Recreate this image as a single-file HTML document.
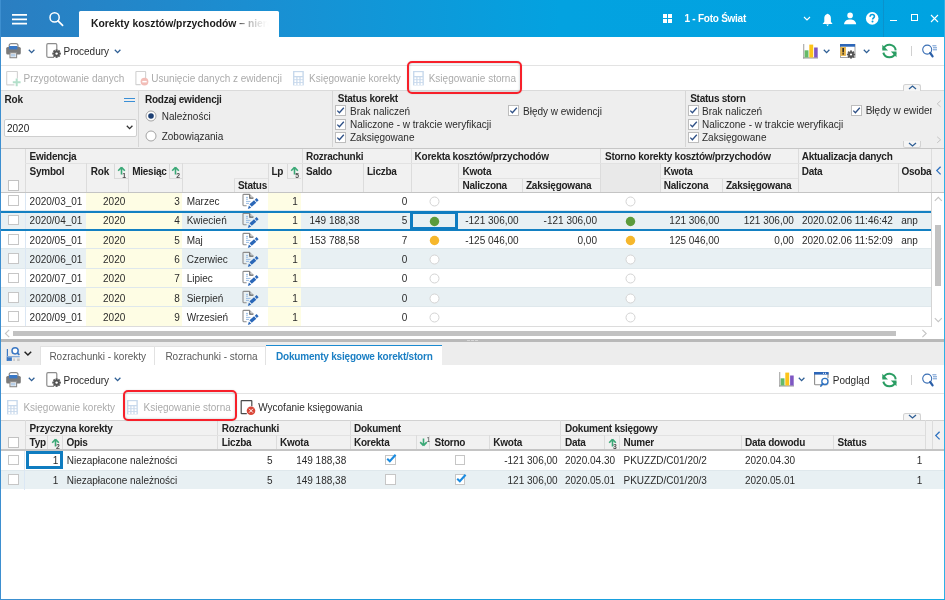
<!DOCTYPE html><html><head><meta charset="utf-8"><style>
*{margin:0;padding:0;box-sizing:border-box}
html,body{width:945px;height:600px;overflow:hidden;background:#fff}
body{position:relative;will-change:transform;font-family:"Liberation Sans",sans-serif;font-size:10px;color:#2b2b2b}
.a{position:absolute}
.t{position:absolute;white-space:nowrap;line-height:12px}
.b{font-weight:bold;font-size:10px;letter-spacing:-0.25px}
.dis{color:#ababab}
.cb{position:absolute;width:11px;height:11px;background:#fff;border:1px solid #c4c4c4}
.hl{position:absolute;background:#dedede}
svg{position:absolute;overflow:visible}
</style></head><body>
<div class="a" style="left:0px;top:0px;width:945px;height:37px;background:linear-gradient(90deg,#2b7ec1 0px,#1a8fd2 260px,#03a2e0 560px,#00a3e1 945px)"></div>
<svg style="left:12px;top:12px" width="16" height="14" viewBox="0 0 16 14"><path d="M0 2.9 H15 M0 7.3 H15 M0 11.6 H15" stroke="#fff" stroke-width="1.7"/></svg>
<svg style="left:48px;top:11px" width="18" height="18" viewBox="0 0 18 18"><circle cx="6.6" cy="6.4" r="4.6" fill="none" stroke="#fff" stroke-width="1.5"/><line x1="10" y1="9.8" x2="14.6" y2="14.4" stroke="#fff" stroke-width="1.7" stroke-linecap="round"/></svg>
<div class="a" style="left:79px;top:11px;width:200px;height:26px;background:#fff;border-radius:1.5px 1.5px 0 0"></div>
<div class="t" style="left:91px;top:18px;font-weight:bold;font-size:10.35px;color:#1a1a1a;width:182px;overflow:hidden;-webkit-mask-image:linear-gradient(90deg,#000 146px,rgba(0,0,0,.55) 152px,rgba(0,0,0,.3) 160px,rgba(0,0,0,.14) 168px,rgba(0,0,0,.04) 174px,transparent 178px)">Korekty kosztów/przychodów – nierozliczone</div>
<div class="a" style="left:662.8px;top:14.2px;width:3.9px;height:3.8px;background:#fff"></div>
<div class="a" style="left:668.3px;top:14.2px;width:3.9px;height:3.8px;background:#fff"></div>
<div class="a" style="left:662.8px;top:18.8px;width:3.9px;height:3.8px;background:#fff"></div>
<div class="a" style="left:668.3px;top:18.8px;width:3.9px;height:3.8px;background:#fff"></div>
<div class="t b" style="left:684.5px;top:12.8px;color:#fff">1 - Foto Świat</div>
<svg style="left:803px;top:16px" width="9" height="6" viewBox="0 0 9 6"><polyline points="1,1 4,4 7,1" fill="none" stroke="#fff" stroke-width="1.1"/></svg>
<svg style="left:822px;top:13px" width="12" height="15" viewBox="0 0 12 15"><path d="M5.5 1.2 C3 1.2 2.3 3.5 2.3 5.5 L2.3 8.8 L0.6 11 L10.6 11 L8.9 8.8 L8.9 5.5 C8.9 3.5 8.2 1.2 5.6 1.2Z" fill="#fff"/><circle cx="5.6" cy="1.6" r="0.9" fill="#fff"/><path d="M4.3 11.6 L6.9 11.6 L5.6 13.2Z" fill="#fff"/></svg>
<svg style="left:843px;top:12px" width="14" height="14" viewBox="0 0 14 14"><circle cx="7.1" cy="3.4" r="2.8" fill="#fff"/><path d="M1 12.2 C1.5 8.6 4 7.4 7.1 7.4 C10.2 7.4 12.7 8.6 13.2 12.2Z" fill="#fff"/></svg>
<svg style="left:865px;top:11px" width="15" height="15" viewBox="0 0 15 15"><circle cx="7.2" cy="7.4" r="6.3" fill="#fff"/><path d="M5.1 5.7 C5.1 4.2 6.1 3.5 7.3 3.5 C8.6 3.5 9.4 4.3 9.4 5.4 C9.4 6.8 7.6 7 7.6 8.6" fill="none" stroke="#06a0de" stroke-width="1.6"/><circle cx="7.5" cy="10.6" r="1" fill="#06a0de"/></svg>
<div class="a" style="left:883px;top:0px;width:1px;height:37px;background:#0a92cc"></div>
<div class="a" style="left:889.7px;top:19.6px;width:7.2px;height:1.2px;background:#fff"></div>
<div class="a" style="left:910.8px;top:13.9px;width:7.2px;height:7.2px;border:1.1px solid #fff"></div>
<svg style="left:930px;top:14px" width="10" height="9" viewBox="0 0 10 9"><path d="M1 1 L8 8 M8 1 L1 8" stroke="#fff" stroke-width="1.1"/></svg>
<svg style="left:5.5px;top:43px" width="16" height="16" viewBox="0 0 16 16"><rect x="3.2" y="0.6" width="8.8" height="5" rx="2" fill="none" stroke="#8a8a8a" stroke-width="1.2"/><rect x="0.2" y="4" width="14.6" height="7.4" rx="1.5" fill="#7a7a7a"/><rect x="3" y="3" width="8.4" height="3.4" fill="#3a78c6"/><rect x="4" y="9.8" width="6.6" height="4.9" fill="#fff" stroke="#8a8a8a" stroke-width="1.1"/><rect x="5" y="11" width="4.6" height="2.6" fill="#b8cfe8"/></svg>
<svg style="left:28px;top:48.5px" width="8" height="5" viewBox="0 0 8 5"><polyline points="0.8,0.8 3.6,3.6 6.4,0.8" fill="none" stroke="#2f5f95" stroke-width="1.3"/></svg>
<svg style="left:45.5px;top:43px" width="16" height="16" viewBox="0 0 16 16"><path d="M8 14.3 L2 14.3 Q0.8 14.3 0.8 13.1 L0.8 1.9 Q0.8 0.7 2 0.7 L9.6 0.7 Q10.8 0.7 10.8 1.9 L10.8 6.8" fill="none" stroke="#8c8c8c" stroke-width="1.2"/><g transform="translate(10.6,10.6)"><circle r="3.1" fill="#555"/><rect x="-1" y="-4.3" width="2" height="2.2" fill="#555" transform="rotate(0)"/><rect x="-1" y="-4.3" width="2" height="2.2" fill="#555" transform="rotate(45)"/><rect x="-1" y="-4.3" width="2" height="2.2" fill="#555" transform="rotate(90)"/><rect x="-1" y="-4.3" width="2" height="2.2" fill="#555" transform="rotate(135)"/><rect x="-1" y="-4.3" width="2" height="2.2" fill="#555" transform="rotate(180)"/><rect x="-1" y="-4.3" width="2" height="2.2" fill="#555" transform="rotate(225)"/><rect x="-1" y="-4.3" width="2" height="2.2" fill="#555" transform="rotate(270)"/><rect x="-1" y="-4.3" width="2" height="2.2" fill="#555" transform="rotate(315)"/><circle r="1.2" fill="#fff"/></g></svg>
<div class="t " style="left:63.5px;top:45.7px;color:#2b2b2b">Procedury</div>
<svg style="left:114px;top:48.5px" width="8" height="5" viewBox="0 0 8 5"><polyline points="0.8,0.8 3.6,3.6 6.4,0.8" fill="none" stroke="#2f5f95" stroke-width="1.3"/></svg>
<svg style="left:803.3px;top:43.5px" width="16" height="16" viewBox="0 0 16 16"><rect x="0" y="0" width="1.3" height="14.5" fill="#b4b4b4"/><rect x="0" y="13.3" width="15" height="1.2" fill="#9a9a9a"/><rect x="1.6" y="6.3" width="3.9" height="7.2" fill="#66b968"/><rect x="6.3" y="0.6" width="3.9" height="12.9" fill="#fcc419"/><rect x="11.1" y="3.5" width="3.6" height="10" fill="#7e57c2"/></svg>
<svg style="left:822.8px;top:48.6px" width="8" height="5" viewBox="0 0 8 5"><polyline points="0.8,0.8 3.6,3.6 6.4,0.8" fill="none" stroke="#2f5f95" stroke-width="1.3"/></svg>
<svg style="left:839.5px;top:43.5px" width="16" height="15" viewBox="0 0 16 15"><rect x="0.5" y="0.5" width="14.5" height="13" fill="#fff" stroke="#9a9a9a" stroke-width="0.9"/><rect x="0" y="0" width="15" height="2.7" fill="#2c66b8"/><rect x="0.3" y="2.9" width="5.6" height="9" fill="#e8b54a"/><rect x="2.4" y="4" width="1.5" height="4.4" fill="#222"/><rect x="2.4" y="9.2" width="1.5" height="1.4" fill="#222"/><g transform="translate(11,10.5)"><circle r="2.9" fill="#555"/><rect x="-0.9" y="-4.1" width="1.8" height="2" fill="#555" transform="rotate(0)"/><rect x="-0.9" y="-4.1" width="1.8" height="2" fill="#555" transform="rotate(45)"/><rect x="-0.9" y="-4.1" width="1.8" height="2" fill="#555" transform="rotate(90)"/><rect x="-0.9" y="-4.1" width="1.8" height="2" fill="#555" transform="rotate(135)"/><rect x="-0.9" y="-4.1" width="1.8" height="2" fill="#555" transform="rotate(180)"/><rect x="-0.9" y="-4.1" width="1.8" height="2" fill="#555" transform="rotate(225)"/><rect x="-0.9" y="-4.1" width="1.8" height="2" fill="#555" transform="rotate(270)"/><rect x="-0.9" y="-4.1" width="1.8" height="2" fill="#555" transform="rotate(315)"/><circle r="1.1" fill="#fff"/></g></svg>
<svg style="left:863px;top:48.6px" width="8" height="5" viewBox="0 0 8 5"><polyline points="0.8,0.8 3.6,3.6 6.4,0.8" fill="none" stroke="#2f5f95" stroke-width="1.3"/></svg>
<svg style="left:880.5px;top:42.5px" width="16" height="16" viewBox="0 0 16 16"><path d="M2.31 6.37 A6.3 6.3 0 0 1 14.68 7.45" fill="none" stroke="#2a9d63" stroke-width="2"/><path d="M2.31 9.63 A6.3 6.3 0 0 0 14.49 9.63" fill="none" stroke="#2a9d63" stroke-width="2"/><path d="M1.3 1.8 L1.3 7.5 L7 7.5Z" fill="#2a9d63"/><path d="M15.5 14.2 L15.5 8.5 L9.8 8.5Z" fill="#2a9d63"/></svg>
<div class="a" style="left:911px;top:45.8px;width:1px;height:10px;background:#d0d0d0"></div>
<svg style="left:922px;top:42.5px" width="16" height="16" viewBox="0 0 16 16"><circle cx="5.2" cy="6.6" r="4.5" fill="none" stroke="#3a6fb5" stroke-width="1.1"/><line x1="8.2" y1="10" x2="10.6" y2="13.4" stroke="#2b5fa8" stroke-width="2.2" stroke-linecap="round"/><path d="M10.4 2.8 H14.4 M11 4.8 H15 M11 6.8 H15" stroke="#5a8acb" stroke-width="0.9"/></svg>
<div class="a" style="left:1px;top:65px;width:943px;height:1px;background:#e3e3e3"></div>
<svg style="left:6px;top:70.6px" width="16" height="16" viewBox="0 0 16 16"><path d="M8.4 13.9 L1.1 13.9 Q0.7 13.9 0.7 13.5 L0.7 0.9 Q0.7 0.5 1.1 0.5 L11 0.5 Q11.4 0.5 11.4 0.9 L11.4 7.6" fill="none" stroke="#d2d2d2" stroke-width="1.1"/><path d="M10.7 7.4 V15.2 M6.8 11.3 H14.6" stroke="#b3dfca" stroke-width="2"/></svg>
<div class="t dis" style="left:23.6px;top:73.2px;">Przygotowanie danych</div>
<svg style="left:134.5px;top:70.8px" width="16" height="16" viewBox="0 0 16 16"><path d="M5.6 13.6 L1.3 13.6 Q0.9 13.6 0.9 13.2 L0.9 0.9 Q0.9 0.5 1.3 0.5 L10.2 0.5 Q10.6 0.5 10.6 0.9 L10.6 7.2" fill="none" stroke="#d2d2d2" stroke-width="1.1"/><circle cx="9.5" cy="10.6" r="3.9" fill="#f2bdb7"/><rect x="7.3" y="9.9" width="4.4" height="1.5" fill="#fff"/></svg>
<div class="t dis" style="left:151.3px;top:73.2px;">Usunięcie danych z ewidencji</div>
<svg style="left:293.4px;top:71px" width="14" height="16" viewBox="0 0 14 16"><rect x="0" y="0" width="10.8" height="14.4" fill="#c8d9ec"/><rect x="1.4" y="1.2" width="8" height="3.8" fill="#fff"/><rect x="1.4" y="6.3" width="1.9" height="2" fill="#fff"/><rect x="1.4" y="9.15" width="1.9" height="2" fill="#fff"/><rect x="1.4" y="12.0" width="1.9" height="2" fill="#fff"/><rect x="4.5" y="6.3" width="1.9" height="2" fill="#fff"/><rect x="4.5" y="9.15" width="1.9" height="2" fill="#fff"/><rect x="4.5" y="12.0" width="1.9" height="2" fill="#fff"/><rect x="7.6" y="6.3" width="1.9" height="2" fill="#fff"/><rect x="7.6" y="9.15" width="1.9" height="2" fill="#fff"/><rect x="7.6" y="12.0" width="1.9" height="2" fill="#fff"/></svg>
<div class="t dis" style="left:309px;top:73.2px;">Księgowanie korekty</div>
<svg style="left:413.1px;top:71px" width="14" height="16" viewBox="0 0 14 16"><rect x="0" y="0" width="10.8" height="14.4" fill="#c8d9ec"/><rect x="1.4" y="1.2" width="8" height="3.8" fill="#fff"/><rect x="1.4" y="6.3" width="1.9" height="2" fill="#fff"/><rect x="1.4" y="9.15" width="1.9" height="2" fill="#fff"/><rect x="1.4" y="12.0" width="1.9" height="2" fill="#fff"/><rect x="4.5" y="6.3" width="1.9" height="2" fill="#fff"/><rect x="4.5" y="9.15" width="1.9" height="2" fill="#fff"/><rect x="4.5" y="12.0" width="1.9" height="2" fill="#fff"/><rect x="7.6" y="6.3" width="1.9" height="2" fill="#fff"/><rect x="7.6" y="9.15" width="1.9" height="2" fill="#fff"/><rect x="7.6" y="12.0" width="1.9" height="2" fill="#fff"/></svg>
<div class="t dis" style="left:428.7px;top:73.2px;">Księgowanie storna</div>
<div class="a" style="left:1px;top:90px;width:943px;height:59.7px;background:#eeeeee;border-top:1px solid #dadada;border-bottom:2px solid #c6c6c6"></div>
<div class="a" style="left:138px;top:91px;width:1px;height:56px;background:#d6d6d6"></div>
<div class="a" style="left:332px;top:91px;width:1px;height:56px;background:#d6d6d6"></div>
<div class="a" style="left:685px;top:91px;width:1px;height:56px;background:#d6d6d6"></div>
<div class="t b" style="left:4.6px;top:94.2px;color:#1e1e1e">Rok</div>
<div class="a" style="left:124px;top:97.5px;width:10.5px;height:1.3px;background:#3a8fd6"></div>
<div class="a" style="left:124px;top:100.6px;width:10.5px;height:1.3px;background:#3a8fd6"></div>
<div class="a" style="left:4px;top:119px;width:132.5px;height:18px;background:#fff;border:1px solid #cfcfcf;border-radius:2px"></div>
<div class="t " style="left:7px;top:123.2px;color:#222">2020</div>
<svg style="left:126px;top:125px" width="8" height="5" viewBox="0 0 8 5"><polyline points="0.8,0.8 3.6,3.6 6.4,0.8" fill="none" stroke="#333" stroke-width="1.3"/></svg>
<div class="t b" style="left:145px;top:94.2px;color:#1e1e1e">Rodzaj ewidencji</div>
<svg style="left:145px;top:110px" width="12" height="12" viewBox="0 0 12 12"><circle cx="6" cy="6" r="5" fill="#fff" stroke="#9a9a9a" stroke-width="0.9"/><circle cx="6" cy="6" r="2.8" fill="#1d3f73"/></svg>
<div class="t " style="left:161.7px;top:111.2px;">Należności</div>
<svg style="left:145px;top:129.7px" width="12" height="12" viewBox="0 0 12 12"><circle cx="6" cy="6" r="5" fill="#fff" stroke="#9a9a9a" stroke-width="0.9"/></svg>
<div class="t " style="left:161.7px;top:130.7px;">Zobowiązania</div>
<div class="t b" style="left:337.8px;top:93.0px;color:#1e1e1e">Status korekt</div>
<div class="a" style="left:335px;top:105.4px;width:11px;height:11px;background:#fff;border:1px solid #bdbdbd"></div>
<svg style="left:335px;top:105.4px" width="11" height="11" viewBox="0 0 11 11"><polyline points="2.3,5.6 4.4,7.7 8.8,2.8" fill="none" stroke="#2d4f86" stroke-width="1.3"/></svg>
<div class="t " style="left:350px;top:105.8px;">Brak naliczeń</div>
<div class="a" style="left:335px;top:118.60000000000001px;width:11px;height:11px;background:#fff;border:1px solid #bdbdbd"></div>
<svg style="left:335px;top:118.60000000000001px" width="11" height="11" viewBox="0 0 11 11"><polyline points="2.3,5.6 4.4,7.7 8.8,2.8" fill="none" stroke="#2d4f86" stroke-width="1.3"/></svg>
<div class="t " style="left:350px;top:119.0px;">Naliczone - w trakcie weryfikacji</div>
<div class="a" style="left:335px;top:131.8px;width:11px;height:11px;background:#fff;border:1px solid #bdbdbd"></div>
<svg style="left:335px;top:131.8px" width="11" height="11" viewBox="0 0 11 11"><polyline points="2.3,5.6 4.4,7.7 8.8,2.8" fill="none" stroke="#2d4f86" stroke-width="1.3"/></svg>
<div class="t " style="left:350px;top:132.2px;">Zaksięgowane</div>
<div class="a" style="left:508px;top:105.4px;width:11px;height:11px;background:#fff;border:1px solid #bdbdbd"></div>
<svg style="left:508px;top:105.4px" width="11" height="11" viewBox="0 0 11 11"><polyline points="2.3,5.6 4.4,7.7 8.8,2.8" fill="none" stroke="#2d4f86" stroke-width="1.3"/></svg>
<div class="t " style="left:523px;top:105.8px;">Błędy w ewidencji</div>
<div class="t b" style="left:690.2px;top:93.0px;color:#1e1e1e">Status storn</div>
<div class="a" style="left:688.2px;top:105.4px;width:11px;height:11px;background:#fff;border:1px solid #bdbdbd"></div>
<svg style="left:688.2px;top:105.4px" width="11" height="11" viewBox="0 0 11 11"><polyline points="2.3,5.6 4.4,7.7 8.8,2.8" fill="none" stroke="#2d4f86" stroke-width="1.3"/></svg>
<div class="t " style="left:702px;top:105.8px;">Brak naliczeń</div>
<div class="a" style="left:688.2px;top:118.60000000000001px;width:11px;height:11px;background:#fff;border:1px solid #bdbdbd"></div>
<svg style="left:688.2px;top:118.60000000000001px" width="11" height="11" viewBox="0 0 11 11"><polyline points="2.3,5.6 4.4,7.7 8.8,2.8" fill="none" stroke="#2d4f86" stroke-width="1.3"/></svg>
<div class="t " style="left:702px;top:119.0px;">Naliczone - w trakcie weryfikacji</div>
<div class="a" style="left:688.2px;top:131.8px;width:11px;height:11px;background:#fff;border:1px solid #bdbdbd"></div>
<svg style="left:688.2px;top:131.8px" width="11" height="11" viewBox="0 0 11 11"><polyline points="2.3,5.6 4.4,7.7 8.8,2.8" fill="none" stroke="#2d4f86" stroke-width="1.3"/></svg>
<div class="t " style="left:702px;top:132.2px;">Zaksięgowane</div>
<div class="a" style="left:851px;top:105.4px;width:11px;height:11px;background:#fff;border:1px solid #bdbdbd"></div>
<svg style="left:851px;top:105.4px" width="11" height="11" viewBox="0 0 11 11"><polyline points="2.3,5.6 4.4,7.7 8.8,2.8" fill="none" stroke="#2d4f86" stroke-width="1.3"/></svg>
<div class="t" style="left:865.7px;top:104.6px;width:66px;overflow:hidden">Błędy w ewidencji</div>
<svg style="left:935.5px;top:99.5px" width="6" height="8" viewBox="0 0 6 8"><polyline points="4.6,0.8 1.2,3.8 4.6,6.8" fill="none" stroke="#c4c4c4" stroke-width="1"/></svg>
<svg style="left:935.5px;top:136.2px" width="6" height="8" viewBox="0 0 6 8"><polyline points="1.2,0.8 4.6,3.8 1.2,6.8" fill="none" stroke="#c4c4c4" stroke-width="1"/></svg>
<div class="a" style="left:903.3px;top:83.9px;width:18.1px;height:7.2px;background:#f5f5f5;border:1px solid #d2d2d2;border-bottom:none;border-radius:2.5px 2.5px 0 0"></div>
<svg style="left:907.5999999999999px;top:84.9px" width="9" height="5" viewBox="0 0 9 5"><polyline points="1,4 4.5,1 8,4" fill="none" stroke="#2f5f95" stroke-width="1.3"/></svg>
<div class="a" style="left:903.3px;top:140.6px;width:18.1px;height:7.2px;background:#f5f5f5;border:1px solid #d2d2d2;border-top:none;border-radius:0 0 2.5px 2.5px"></div>
<svg style="left:907.5999999999999px;top:141.6px" width="9" height="5" viewBox="0 0 9 5"><polyline points="1,1 4.5,4 8,1" fill="none" stroke="#2f5f95" stroke-width="1.3"/></svg>
<div class="a" style="left:1.00px;top:149.00px;width:930.40px;height:43.00px;background:#f1f1f1"></div>
<div class="a" style="left:931.40px;top:149.00px;width:12.60px;height:43.00px;background:#f1f1f1;border-left:1px solid #dcdcdc"></div>
<svg style="left:934.50px;top:166.00px" width="8" height="10" viewBox="0 0 8 10"><polyline points="5.6,0.8 1.8,4.6 5.6,8.4" fill="none" stroke="#2f72c0" stroke-width="1.3"/></svg>
<div class="a" style="left:25.40px;top:149.30px;width:1.00px;height:42.40px;background:#dcdcdc"></div>
<div class="a" style="left:301.50px;top:149.30px;width:1.00px;height:42.40px;background:#dcdcdc"></div>
<div class="a" style="left:410.60px;top:149.30px;width:1.00px;height:42.40px;background:#dcdcdc"></div>
<div class="a" style="left:600.40px;top:149.30px;width:1.00px;height:42.40px;background:#dcdcdc"></div>
<div class="a" style="left:797.60px;top:149.30px;width:1.00px;height:42.40px;background:#dcdcdc"></div>
<div class="a" style="left:931.40px;top:149.30px;width:1.00px;height:42.40px;background:#dcdcdc"></div>
<div class="a" style="left:25.40px;top:163.40px;width:906.00px;height:1.00px;background:#e2e2e2"></div>
<div class="a" style="left:86.40px;top:163.40px;width:1.00px;height:28.30px;background:#dcdcdc"></div>
<div class="a" style="left:128.30px;top:163.40px;width:1.00px;height:28.30px;background:#dcdcdc"></div>
<div class="a" style="left:182.40px;top:163.40px;width:1.00px;height:28.30px;background:#dcdcdc"></div>
<div class="a" style="left:267.70px;top:163.40px;width:1.00px;height:28.30px;background:#dcdcdc"></div>
<div class="a" style="left:363.40px;top:163.40px;width:1.00px;height:28.30px;background:#dcdcdc"></div>
<div class="a" style="left:458.40px;top:163.40px;width:1.00px;height:28.30px;background:#dcdcdc"></div>
<div class="a" style="left:659.80px;top:163.40px;width:1.00px;height:28.30px;background:#dcdcdc"></div>
<div class="a" style="left:897.60px;top:163.40px;width:1.00px;height:28.30px;background:#dcdcdc"></div>
<div class="a" style="left:234.30px;top:178.40px;width:1.00px;height:13.30px;background:#dcdcdc"></div>
<div class="a" style="left:522.40px;top:178.40px;width:1.00px;height:13.30px;background:#dcdcdc"></div>
<div class="a" style="left:722.30px;top:178.40px;width:1.00px;height:13.30px;background:#dcdcdc"></div>
<div class="a" style="left:234.30px;top:178.40px;width:33.40px;height:1.00px;background:#e2e2e2"></div>
<div class="a" style="left:458.40px;top:178.40px;width:142.00px;height:1.00px;background:#e2e2e2"></div>
<div class="a" style="left:659.80px;top:178.40px;width:137.80px;height:1.00px;background:#e2e2e2"></div>
<div class="a" style="left:601.40px;top:164.40px;width:58.40px;height:27.30px;background:#e9e9e9"></div>
<div class="a" style="left:113.80px;top:163.90px;width:14.50px;height:15.00px;border-left:1px solid #dadada;border-bottom:1px solid #dadada"></div>
<svg style="left:117.95px;top:167.20px" width="12" height="12" viewBox="0 0 12 12"><path d="M3.5 0.3 L0.2 3.8 M3.5 0.3 L6.8 3.8 M3.5 0.5 V7.4" fill="none" stroke="#3aa876" stroke-width="1.6"/></svg>
<div class="t" style="right:819.10px;top:171.50px;font-size:6.8px;font-weight:bold;line-height:7px;color:#4a4a4a">1</div>
<div class="a" style="left:168.70px;top:163.90px;width:13.70px;height:15.00px;border-left:1px solid #dadada;border-bottom:1px solid #dadada"></div>
<svg style="left:172.45px;top:167.20px" width="12" height="12" viewBox="0 0 12 12"><path d="M3.5 0.3 L0.2 3.8 M3.5 0.3 L6.8 3.8 M3.5 0.5 V7.4" fill="none" stroke="#3aa876" stroke-width="1.6"/></svg>
<div class="t" style="right:765.00px;top:171.50px;font-size:6.8px;font-weight:bold;line-height:7px;color:#4a4a4a">2</div>
<div class="a" style="left:287.20px;top:163.90px;width:14.30px;height:15.00px;border-left:1px solid #dadada;border-bottom:1px solid #dadada"></div>
<svg style="left:291.25px;top:167.20px" width="12" height="12" viewBox="0 0 12 12"><path d="M3.5 0.3 L0.2 3.8 M3.5 0.3 L6.8 3.8 M3.5 0.5 V7.4" fill="none" stroke="#3aa876" stroke-width="1.6"/></svg>
<div class="t" style="right:645.90px;top:171.50px;font-size:6.8px;font-weight:bold;line-height:7px;color:#4a4a4a">5</div>
<div class="a" style="left:1.00px;top:191.70px;width:930.40px;height:1.40px;background:#c4c4c4"></div>
<div class="a" style="left:931.40px;top:191.70px;width:12.60px;height:1.40px;background:#c4c4c4"></div>
<div class="t b" style="left:29.60px;top:150.90px;color:#222">Ewidencja</div>
<div class="t b" style="left:306.00px;top:150.90px;color:#222">Rozrachunki</div>
<div class="t b" style="left:414.60px;top:150.90px;color:#222">Korekta kosztów/przychodów</div>
<div class="t b" style="left:605.00px;top:150.90px;color:#222">Storno korekty kosztów/przychodów</div>
<div class="t b" style="left:801.70px;top:150.90px;color:#222">Aktualizacja danych</div>
<div class="t b" style="left:29.60px;top:166.40px;color:#222">Symbol</div>
<div class="t b" style="left:90.80px;top:166.40px;color:#222">Rok</div>
<div class="t b" style="left:132.20px;top:166.40px;color:#222">Miesiąc</div>
<div class="t b" style="left:271.50px;top:166.40px;color:#222">Lp</div>
<div class="t b" style="left:306.00px;top:166.40px;color:#222">Saldo</div>
<div class="t b" style="left:367.00px;top:166.40px;color:#222">Liczba</div>
<div class="t b" style="left:462.50px;top:166.40px;color:#222">Kwota</div>
<div class="t b" style="left:663.80px;top:166.40px;color:#222">Kwota</div>
<div class="t b" style="left:801.70px;top:166.40px;color:#222">Data</div>
<div class="t b" style="left:901.50px;top:166.40px;color:#222">Osoba</div>
<div class="t b" style="left:237.90px;top:180.40px;color:#222">Status</div>
<div class="t b" style="left:462.50px;top:180.40px;color:#222">Naliczona</div>
<div class="t b" style="left:526.00px;top:180.40px;color:#222">Zaksięgowana</div>
<div class="t b" style="left:663.80px;top:180.40px;color:#222">Naliczona</div>
<div class="t b" style="left:726.00px;top:180.40px;color:#222">Zaksięgowana</div>
<div class="a" style="left:7.60px;top:180.00px;width:11.00px;height:10.80px;background:#fff;border:1px solid #c2c2c2"></div>
<div class="a" style="left:1px;top:193.1px;width:930.4px;height:133px;overflow:hidden;background:#fff">
<div class="a" style="left:0;top:-2.06px;width:930.4px;height:19.32px;background:#fff"></div>
<div class="a" style="left:85.40px;top:-2.06px;width:96.00px;height:19.32px;background:#fefde4"></div>
<div class="a" style="left:266.70px;top:-2.06px;width:33.80px;height:19.32px;background:#fefde4"></div>
<div class="a" style="left:0;top:17.26px;width:930.4px;height:19.32px;background:#e8f0f3"></div>
<div class="a" style="left:85.40px;top:17.26px;width:96.00px;height:19.32px;background:#fefde4"></div>
<div class="a" style="left:266.70px;top:17.26px;width:33.80px;height:19.32px;background:#fefde4"></div>
<div class="a" style="left:0;top:36.58px;width:930.4px;height:19.32px;background:#fff"></div>
<div class="a" style="left:85.40px;top:36.58px;width:96.00px;height:19.32px;background:#fefde4"></div>
<div class="a" style="left:266.70px;top:36.58px;width:33.80px;height:19.32px;background:#fefde4"></div>
<div class="a" style="left:0;top:55.90px;width:930.4px;height:19.32px;background:#e8f0f3"></div>
<div class="a" style="left:85.40px;top:55.90px;width:96.00px;height:19.32px;background:#fefde4"></div>
<div class="a" style="left:266.70px;top:55.90px;width:33.80px;height:19.32px;background:#fefde4"></div>
<div class="a" style="left:0;top:75.22px;width:930.4px;height:19.32px;background:#fff"></div>
<div class="a" style="left:85.40px;top:75.22px;width:96.00px;height:19.32px;background:#fefde4"></div>
<div class="a" style="left:266.70px;top:75.22px;width:33.80px;height:19.32px;background:#fefde4"></div>
<div class="a" style="left:0;top:94.54px;width:930.4px;height:19.32px;background:#e8f0f3"></div>
<div class="a" style="left:85.40px;top:94.54px;width:96.00px;height:19.32px;background:#fefde4"></div>
<div class="a" style="left:266.70px;top:94.54px;width:33.80px;height:19.32px;background:#fefde4"></div>
<div class="a" style="left:0;top:113.86px;width:930.4px;height:19.32px;background:#fff"></div>
<div class="a" style="left:85.40px;top:113.86px;width:96.00px;height:19.32px;background:#fefde4"></div>
<div class="a" style="left:266.70px;top:113.86px;width:33.80px;height:19.32px;background:#fefde4"></div>
<div class="a" style="left:0;top:16.76px;width:930.4px;height:1px;background:#dfe8ec"></div>
<div class="a" style="left:0;top:36.08px;width:930.4px;height:1px;background:#dfe8ec"></div>
<div class="a" style="left:0;top:55.40px;width:930.4px;height:1px;background:#dfe8ec"></div>
<div class="a" style="left:0;top:74.72px;width:930.4px;height:1px;background:#dfe8ec"></div>
<div class="a" style="left:0;top:94.04px;width:930.4px;height:1px;background:#dfe8ec"></div>
<div class="a" style="left:0;top:113.36px;width:930.4px;height:1px;background:#dfe8ec"></div>
<div class="a" style="left:24.4px;top:0;width:1px;height:133px;background:#dbe7f4"></div>
</div>
<div class="a" style="left:8.00px;top:195.40px;width:10.60px;height:10.60px;background:#fff;border:1px solid #c6c6c6"></div>
<div class="t " style="left:29.60px;top:195.90px;">2020/03_01</div>
<div class="t " style="right:819.70px;top:195.90px;">2020</div>
<div class="t " style="right:765.30px;top:195.90px;">3</div>
<div class="t " style="left:186.70px;top:195.90px;">Marzec</div>
<svg style="left:240.00px;top:193.00px" width="20" height="18" viewBox="0 0 20 18"><path d="M6.6 12.7 H3.6 Q3 12.7 3 12.1 V2 Q3 1.4 3.6 1.4 H9.8" fill="none" stroke="#8c8c8c" stroke-width="1.1"/><path d="M9.8 1.6 V5.2 H13.4" fill="none" stroke="#5a5a5a" stroke-width="1.2"/><path d="M10.2 1.8 L13.2 4.8" stroke="#9a9a9a" stroke-width="0.8"/><path d="M6 4.4 H8 M6 6.2 H8 M6 8.4 H10.4 M6 10.4 H9" stroke="#8db4e0" stroke-width="0.9"/><line x1="10.6" y1="12.6" x2="15.2" y2="8.4" stroke="#2a67b8" stroke-width="3.4"/><line x1="15.8" y1="7.8" x2="17.6" y2="6.2" stroke="#2a67b8" stroke-width="3"/><path d="M7.9 15.9 L8.9 12.6 L11.2 14.8Z" fill="#2a67b8"/></svg>
<div class="t " style="right:647.20px;top:195.90px;">1</div>
<div class="t " style="right:537.80px;top:195.90px;">0</div>
<svg style="left:428.90px;top:196.20px" width="11" height="11" viewBox="0 0 11 11"><circle cx="5.5" cy="5.5" r="4.5" fill="#fff" stroke="#d4d4d4" stroke-width="1"/></svg>
<svg style="left:624.70px;top:196.20px" width="11" height="11" viewBox="0 0 11 11"><circle cx="5.5" cy="5.5" r="4.5" fill="#fff" stroke="#d4d4d4" stroke-width="1"/></svg>
<div class="a" style="left:8.00px;top:214.72px;width:10.60px;height:10.60px;background:#fff;border:1px solid #c6c6c6"></div>
<div class="t " style="left:29.60px;top:215.22px;">2020/04_01</div>
<div class="t " style="right:819.70px;top:215.22px;">2020</div>
<div class="t " style="right:765.30px;top:215.22px;">4</div>
<div class="t " style="left:186.70px;top:215.22px;">Kwiecień</div>
<svg style="left:240.00px;top:212.32px" width="20" height="18" viewBox="0 0 20 18"><path d="M6.6 12.7 H3.6 Q3 12.7 3 12.1 V2 Q3 1.4 3.6 1.4 H9.8" fill="none" stroke="#8c8c8c" stroke-width="1.1"/><path d="M9.8 1.6 V5.2 H13.4" fill="none" stroke="#5a5a5a" stroke-width="1.2"/><path d="M10.2 1.8 L13.2 4.8" stroke="#9a9a9a" stroke-width="0.8"/><path d="M6 4.4 H8 M6 6.2 H8 M6 8.4 H10.4 M6 10.4 H9" stroke="#8db4e0" stroke-width="0.9"/><line x1="10.6" y1="12.6" x2="15.2" y2="8.4" stroke="#2a67b8" stroke-width="3.4"/><line x1="15.8" y1="7.8" x2="17.6" y2="6.2" stroke="#2a67b8" stroke-width="3"/><path d="M7.9 15.9 L8.9 12.6 L11.2 14.8Z" fill="#2a67b8"/></svg>
<div class="t " style="right:647.20px;top:215.22px;">1</div>
<div class="t " style="right:585.50px;top:215.22px;">149 188,38</div>
<div class="t " style="right:537.80px;top:215.22px;">5</div>
<svg style="left:428.90px;top:215.52px" width="11" height="11" viewBox="0 0 11 11"><circle cx="5.5" cy="5.5" r="4.7" fill="#5b9b3c"/></svg>
<svg style="left:624.70px;top:215.52px" width="11" height="11" viewBox="0 0 11 11"><circle cx="5.5" cy="5.5" r="4.7" fill="#5b9b3c"/></svg>
<div class="t " style="right:426.40px;top:215.22px;">-121 306,00</div>
<div class="t " style="right:348.00px;top:215.22px;">-121 306,00</div>
<div class="t " style="right:225.60px;top:215.22px;">121 306,00</div>
<div class="t " style="right:151.20px;top:215.22px;">121 306,00</div>
<div class="t " style="left:801.90px;top:215.22px;">2020.02.06 11:46:42</div>
<div class="t " style="left:901.20px;top:215.22px;">anp</div>
<div class="a" style="left:8.00px;top:234.04px;width:10.60px;height:10.60px;background:#fff;border:1px solid #c6c6c6"></div>
<div class="t " style="left:29.60px;top:234.54px;">2020/05_01</div>
<div class="t " style="right:819.70px;top:234.54px;">2020</div>
<div class="t " style="right:765.30px;top:234.54px;">5</div>
<div class="t " style="left:186.70px;top:234.54px;">Maj</div>
<svg style="left:240.00px;top:231.64px" width="20" height="18" viewBox="0 0 20 18"><path d="M6.6 12.7 H3.6 Q3 12.7 3 12.1 V2 Q3 1.4 3.6 1.4 H9.8" fill="none" stroke="#8c8c8c" stroke-width="1.1"/><path d="M9.8 1.6 V5.2 H13.4" fill="none" stroke="#5a5a5a" stroke-width="1.2"/><path d="M10.2 1.8 L13.2 4.8" stroke="#9a9a9a" stroke-width="0.8"/><path d="M6 4.4 H8 M6 6.2 H8 M6 8.4 H10.4 M6 10.4 H9" stroke="#8db4e0" stroke-width="0.9"/><line x1="10.6" y1="12.6" x2="15.2" y2="8.4" stroke="#2a67b8" stroke-width="3.4"/><line x1="15.8" y1="7.8" x2="17.6" y2="6.2" stroke="#2a67b8" stroke-width="3"/><path d="M7.9 15.9 L8.9 12.6 L11.2 14.8Z" fill="#2a67b8"/></svg>
<div class="t " style="right:647.20px;top:234.54px;">1</div>
<div class="t " style="right:585.50px;top:234.54px;">153 788,58</div>
<div class="t " style="right:537.80px;top:234.54px;">7</div>
<svg style="left:428.90px;top:234.84px" width="11" height="11" viewBox="0 0 11 11"><circle cx="5.5" cy="5.5" r="4.7" fill="#f6b72c"/></svg>
<svg style="left:624.70px;top:234.84px" width="11" height="11" viewBox="0 0 11 11"><circle cx="5.5" cy="5.5" r="4.7" fill="#f6b72c"/></svg>
<div class="t " style="right:426.40px;top:234.54px;">-125 046,00</div>
<div class="t " style="right:348.00px;top:234.54px;">0,00</div>
<div class="t " style="right:225.60px;top:234.54px;">125 046,00</div>
<div class="t " style="right:151.20px;top:234.54px;">0,00</div>
<div class="t " style="left:801.90px;top:234.54px;">2020.02.06 11:52:09</div>
<div class="t " style="left:901.20px;top:234.54px;">anp</div>
<div class="a" style="left:8.00px;top:253.36px;width:10.60px;height:10.60px;background:#fff;border:1px solid #c6c6c6"></div>
<div class="t " style="left:29.60px;top:253.86px;">2020/06_01</div>
<div class="t " style="right:819.70px;top:253.86px;">2020</div>
<div class="t " style="right:765.30px;top:253.86px;">6</div>
<div class="t " style="left:186.70px;top:253.86px;">Czerwiec</div>
<svg style="left:240.00px;top:250.96px" width="20" height="18" viewBox="0 0 20 18"><path d="M6.6 12.7 H3.6 Q3 12.7 3 12.1 V2 Q3 1.4 3.6 1.4 H9.8" fill="none" stroke="#8c8c8c" stroke-width="1.1"/><path d="M9.8 1.6 V5.2 H13.4" fill="none" stroke="#5a5a5a" stroke-width="1.2"/><path d="M10.2 1.8 L13.2 4.8" stroke="#9a9a9a" stroke-width="0.8"/><path d="M6 4.4 H8 M6 6.2 H8 M6 8.4 H10.4 M6 10.4 H9" stroke="#8db4e0" stroke-width="0.9"/><line x1="10.6" y1="12.6" x2="15.2" y2="8.4" stroke="#2a67b8" stroke-width="3.4"/><line x1="15.8" y1="7.8" x2="17.6" y2="6.2" stroke="#2a67b8" stroke-width="3"/><path d="M7.9 15.9 L8.9 12.6 L11.2 14.8Z" fill="#2a67b8"/></svg>
<div class="t " style="right:647.20px;top:253.86px;">1</div>
<div class="t " style="right:537.80px;top:253.86px;">0</div>
<svg style="left:428.90px;top:254.16px" width="11" height="11" viewBox="0 0 11 11"><circle cx="5.5" cy="5.5" r="4.5" fill="#fff" stroke="#d4d4d4" stroke-width="1"/></svg>
<svg style="left:624.70px;top:254.16px" width="11" height="11" viewBox="0 0 11 11"><circle cx="5.5" cy="5.5" r="4.5" fill="#fff" stroke="#d4d4d4" stroke-width="1"/></svg>
<div class="a" style="left:8.00px;top:272.68px;width:10.60px;height:10.60px;background:#fff;border:1px solid #c6c6c6"></div>
<div class="t " style="left:29.60px;top:273.18px;">2020/07_01</div>
<div class="t " style="right:819.70px;top:273.18px;">2020</div>
<div class="t " style="right:765.30px;top:273.18px;">7</div>
<div class="t " style="left:186.70px;top:273.18px;">Lipiec</div>
<svg style="left:240.00px;top:270.28px" width="20" height="18" viewBox="0 0 20 18"><path d="M6.6 12.7 H3.6 Q3 12.7 3 12.1 V2 Q3 1.4 3.6 1.4 H9.8" fill="none" stroke="#8c8c8c" stroke-width="1.1"/><path d="M9.8 1.6 V5.2 H13.4" fill="none" stroke="#5a5a5a" stroke-width="1.2"/><path d="M10.2 1.8 L13.2 4.8" stroke="#9a9a9a" stroke-width="0.8"/><path d="M6 4.4 H8 M6 6.2 H8 M6 8.4 H10.4 M6 10.4 H9" stroke="#8db4e0" stroke-width="0.9"/><line x1="10.6" y1="12.6" x2="15.2" y2="8.4" stroke="#2a67b8" stroke-width="3.4"/><line x1="15.8" y1="7.8" x2="17.6" y2="6.2" stroke="#2a67b8" stroke-width="3"/><path d="M7.9 15.9 L8.9 12.6 L11.2 14.8Z" fill="#2a67b8"/></svg>
<div class="t " style="right:647.20px;top:273.18px;">1</div>
<div class="t " style="right:537.80px;top:273.18px;">0</div>
<svg style="left:428.90px;top:273.48px" width="11" height="11" viewBox="0 0 11 11"><circle cx="5.5" cy="5.5" r="4.5" fill="#fff" stroke="#d4d4d4" stroke-width="1"/></svg>
<svg style="left:624.70px;top:273.48px" width="11" height="11" viewBox="0 0 11 11"><circle cx="5.5" cy="5.5" r="4.5" fill="#fff" stroke="#d4d4d4" stroke-width="1"/></svg>
<div class="a" style="left:8.00px;top:292.00px;width:10.60px;height:10.60px;background:#fff;border:1px solid #c6c6c6"></div>
<div class="t " style="left:29.60px;top:292.50px;">2020/08_01</div>
<div class="t " style="right:819.70px;top:292.50px;">2020</div>
<div class="t " style="right:765.30px;top:292.50px;">8</div>
<div class="t " style="left:186.70px;top:292.50px;">Sierpień</div>
<svg style="left:240.00px;top:289.60px" width="20" height="18" viewBox="0 0 20 18"><path d="M6.6 12.7 H3.6 Q3 12.7 3 12.1 V2 Q3 1.4 3.6 1.4 H9.8" fill="none" stroke="#8c8c8c" stroke-width="1.1"/><path d="M9.8 1.6 V5.2 H13.4" fill="none" stroke="#5a5a5a" stroke-width="1.2"/><path d="M10.2 1.8 L13.2 4.8" stroke="#9a9a9a" stroke-width="0.8"/><path d="M6 4.4 H8 M6 6.2 H8 M6 8.4 H10.4 M6 10.4 H9" stroke="#8db4e0" stroke-width="0.9"/><line x1="10.6" y1="12.6" x2="15.2" y2="8.4" stroke="#2a67b8" stroke-width="3.4"/><line x1="15.8" y1="7.8" x2="17.6" y2="6.2" stroke="#2a67b8" stroke-width="3"/><path d="M7.9 15.9 L8.9 12.6 L11.2 14.8Z" fill="#2a67b8"/></svg>
<div class="t " style="right:647.20px;top:292.50px;">1</div>
<div class="t " style="right:537.80px;top:292.50px;">0</div>
<svg style="left:428.90px;top:292.80px" width="11" height="11" viewBox="0 0 11 11"><circle cx="5.5" cy="5.5" r="4.5" fill="#fff" stroke="#d4d4d4" stroke-width="1"/></svg>
<svg style="left:624.70px;top:292.80px" width="11" height="11" viewBox="0 0 11 11"><circle cx="5.5" cy="5.5" r="4.5" fill="#fff" stroke="#d4d4d4" stroke-width="1"/></svg>
<div class="a" style="left:8.00px;top:311.32px;width:10.60px;height:10.60px;background:#fff;border:1px solid #c6c6c6"></div>
<div class="t " style="left:29.60px;top:311.82px;">2020/09_01</div>
<div class="t " style="right:819.70px;top:311.82px;">2020</div>
<div class="t " style="right:765.30px;top:311.82px;">9</div>
<div class="t " style="left:186.70px;top:311.82px;">Wrzesień</div>
<svg style="left:240.00px;top:308.92px" width="20" height="18" viewBox="0 0 20 18"><path d="M6.6 12.7 H3.6 Q3 12.7 3 12.1 V2 Q3 1.4 3.6 1.4 H9.8" fill="none" stroke="#8c8c8c" stroke-width="1.1"/><path d="M9.8 1.6 V5.2 H13.4" fill="none" stroke="#5a5a5a" stroke-width="1.2"/><path d="M10.2 1.8 L13.2 4.8" stroke="#9a9a9a" stroke-width="0.8"/><path d="M6 4.4 H8 M6 6.2 H8 M6 8.4 H10.4 M6 10.4 H9" stroke="#8db4e0" stroke-width="0.9"/><line x1="10.6" y1="12.6" x2="15.2" y2="8.4" stroke="#2a67b8" stroke-width="3.4"/><line x1="15.8" y1="7.8" x2="17.6" y2="6.2" stroke="#2a67b8" stroke-width="3"/><path d="M7.9 15.9 L8.9 12.6 L11.2 14.8Z" fill="#2a67b8"/></svg>
<div class="t " style="right:647.20px;top:311.82px;">1</div>
<div class="t " style="right:537.80px;top:311.82px;">0</div>
<svg style="left:428.90px;top:312.12px" width="11" height="11" viewBox="0 0 11 11"><circle cx="5.5" cy="5.5" r="4.5" fill="#fff" stroke="#d4d4d4" stroke-width="1"/></svg>
<svg style="left:624.70px;top:312.12px" width="11" height="11" viewBox="0 0 11 11"><circle cx="5.5" cy="5.5" r="4.5" fill="#fff" stroke="#d4d4d4" stroke-width="1"/></svg>
<div class="a" style="left:1.00px;top:210.90px;width:930.40px;height:2.00px;background:#1380c2"></div>
<div class="a" style="left:1.00px;top:228.60px;width:930.40px;height:2.00px;background:#1380c2"></div>
<div class="a" style="left:410.40px;top:210.90px;width:47.70px;height:19.30px;border:3px solid #0f7cc0"></div>
<div class="a" style="left:1.00px;top:325.80px;width:930.40px;height:1.20px;background:#dcdcdc"></div>
<div class="a" style="left:931.40px;top:193.10px;width:12.60px;height:133.90px;background:#fff;border-left:1px solid #d4d4d4"></div>
<svg style="left:933.50px;top:196.00px" width="9" height="6" viewBox="0 0 9 6"><polyline points="0.8,4.8 4.3,1.3 7.8,4.8" fill="none" stroke="#c4c4c4" stroke-width="1.1"/></svg>
<svg style="left:933.50px;top:317.00px" width="9" height="6" viewBox="0 0 9 6"><polyline points="0.8,1.2 4.3,4.7 7.8,1.2" fill="none" stroke="#c4c4c4" stroke-width="1.1"/></svg>
<div class="a" style="left:934.80px;top:225.00px;width:6.40px;height:61.40px;background:#c2c2c2"></div>
<div class="a" style="left:1.00px;top:327.00px;width:943.00px;height:12.30px;background:#fff"></div>
<svg style="left:4.00px;top:329.00px" width="7" height="9" viewBox="0 0 7 9"><polyline points="5.2,0.8 1.4,4.5 5.2,8.2" fill="none" stroke="#c4c4c4" stroke-width="1.1"/></svg>
<div class="a" style="left:13.30px;top:330.50px;width:882.40px;height:5.40px;background:#c2c2c2"></div>
<svg style="left:921.00px;top:329.00px" width="7" height="9" viewBox="0 0 7 9"><polyline points="1.4,0.8 5.2,4.5 1.4,8.2" fill="none" stroke="#c4c4c4" stroke-width="1.1"/></svg>
<div class="a" style="left:1.00px;top:339.30px;width:943.00px;height:2.60px;background:#b9b9b9"></div>
<div class="a" style="left:467.40px;top:340.00px;width:2.60px;height:1.40px;background:#d6d6d6"></div>
<div class="a" style="left:471.30px;top:340.00px;width:2.60px;height:1.40px;background:#d6d6d6"></div>
<div class="a" style="left:475.20px;top:340.00px;width:2.60px;height:1.40px;background:#d6d6d6"></div>
<div class="a" style="left:1.00px;top:341.90px;width:943.00px;height:23.40px;background:#ededed"></div>
<svg style="left:5.00px;top:347.00px" width="18" height="16" viewBox="0 0 18 16"><rect x="1.8" y="2" width="1.2" height="11.9" fill="#3b78c4"/><rect x="1.8" y="9" width="12.9" height="1.3" fill="#86acd9"/><rect x="1.8" y="10.3" width="5.1" height="3.6" fill="#3b78c4"/><rect x="8.3" y="11.5" width="1.6" height="2.5" fill="#c8c8c8"/><rect x="12.1" y="11.5" width="2.6" height="2.5" fill="#c8c8c8"/><circle cx="10.1" cy="3.8" r="3.1" fill="#fff" stroke="#3b78c4" stroke-width="1.5"/><line x1="12.3" y1="6" x2="14.4" y2="7.8" stroke="#3b78c4" stroke-width="1.7"/></svg>
<svg style="left:24.00px;top:351.00px" width="8" height="5" viewBox="0 0 8 5"><polyline points="0.6,0.8 3.9,4 7.2,0.8" fill="none" stroke="#222" stroke-width="1.5"/></svg>
<div class="a" style="left:39.60px;top:345.60px;width:115.60px;height:19.80px;background:#fff;border:1px solid #e2e2e2;border-bottom:none"></div>
<div class="t " style="left:49.40px;top:350.80px;color:#5a5a5a">Rozrachunki - korekty</div>
<div class="a" style="left:155.20px;top:345.60px;width:111.00px;height:19.80px;background:#fff;border:1px solid #e2e2e2;border-left:none;border-bottom:none"></div>
<div class="t " style="left:165.40px;top:350.80px;color:#5a5a5a">Rozrachunki - storna</div>
<div class="a" style="left:266.00px;top:345.20px;width:176.40px;height:20.30px;background:#fff;border-top:1.5px solid #1b8ad0"></div>
<div class="t b" style="left:276.00px;top:350.80px;color:#1b7fc4;letter-spacing:-0.2px">Dokumenty księgowe korekt/storn</div>
<div class="a" style="left:1.00px;top:365.30px;width:943.00px;height:28.40px;background:#fff"></div>
<div class="a" style="left:1.00px;top:393.40px;width:943.00px;height:1.00px;background:#e3e3e3"></div>
<svg style="left:5.50px;top:371.50px" width="16" height="16" viewBox="0 0 16 16"><rect x="3.2" y="0.6" width="8.8" height="5" rx="2" fill="none" stroke="#8a8a8a" stroke-width="1.2"/><rect x="0.2" y="4" width="14.6" height="7.4" rx="1.5" fill="#7a7a7a"/><rect x="3" y="3" width="8.4" height="3.4" fill="#3a78c6"/><rect x="4" y="9.8" width="6.6" height="4.9" fill="#fff" stroke="#8a8a8a" stroke-width="1.1"/><rect x="5" y="11" width="4.6" height="2.6" fill="#b8cfe8"/></svg>
<svg style="left:28.00px;top:377.00px" width="8" height="5" viewBox="0 0 8 5"><polyline points="0.8,0.8 3.6,3.6 6.4,0.8" fill="none" stroke="#2f5f95" stroke-width="1.3"/></svg>
<svg style="left:45.50px;top:371.50px" width="16" height="16" viewBox="0 0 16 16"><path d="M8 14.3 L2 14.3 Q0.8 14.3 0.8 13.1 L0.8 1.9 Q0.8 0.7 2 0.7 L9.6 0.7 Q10.8 0.7 10.8 1.9 L10.8 6.8" fill="none" stroke="#8c8c8c" stroke-width="1.2"/><g transform="translate(10.6,10.6)"><circle r="3.1" fill="#555"/><rect x="-1" y="-4.3" width="2" height="2.2" fill="#555" transform="rotate(0)"/><rect x="-1" y="-4.3" width="2" height="2.2" fill="#555" transform="rotate(45)"/><rect x="-1" y="-4.3" width="2" height="2.2" fill="#555" transform="rotate(90)"/><rect x="-1" y="-4.3" width="2" height="2.2" fill="#555" transform="rotate(135)"/><rect x="-1" y="-4.3" width="2" height="2.2" fill="#555" transform="rotate(180)"/><rect x="-1" y="-4.3" width="2" height="2.2" fill="#555" transform="rotate(225)"/><rect x="-1" y="-4.3" width="2" height="2.2" fill="#555" transform="rotate(270)"/><rect x="-1" y="-4.3" width="2" height="2.2" fill="#555" transform="rotate(315)"/><circle r="1.2" fill="#fff"/></g></svg>
<div class="t " style="left:63.50px;top:374.70px;">Procedury</div>
<svg style="left:114.00px;top:377.00px" width="8" height="5" viewBox="0 0 8 5"><polyline points="0.8,0.8 3.6,3.6 6.4,0.8" fill="none" stroke="#2f5f95" stroke-width="1.3"/></svg>
<svg style="left:779.00px;top:372.00px" width="16" height="16" viewBox="0 0 16 16"><rect x="0" y="0" width="1.3" height="14.5" fill="#b4b4b4"/><rect x="0" y="13.3" width="15" height="1.2" fill="#9a9a9a"/><rect x="1.6" y="6.3" width="3.9" height="7.2" fill="#66b968"/><rect x="6.3" y="0.6" width="3.9" height="12.9" fill="#fcc419"/><rect x="11.1" y="3.5" width="3.6" height="10" fill="#7e57c2"/></svg>
<svg style="left:797.60px;top:377.40px" width="8" height="5" viewBox="0 0 8 5"><polyline points="0.8,0.8 3.6,3.6 6.4,0.8" fill="none" stroke="#2f5f95" stroke-width="1.3"/></svg>
<svg style="left:814.40px;top:372.30px" width="16" height="16" viewBox="0 0 16 16"><rect x="0.6" y="0.6" width="13.4" height="12.2" rx="0.8" fill="#fff" stroke="#8c8c8c" stroke-width="1.1"/><rect x="0" y="0" width="14.6" height="2.6" fill="#2c66b8"/><rect x="9" y="0.8" width="1" height="1" fill="#fff"/><rect x="11" y="0.8" width="1" height="1" fill="#fff"/><rect x="13.4" y="6" width="1.4" height="8" fill="#fff"/><circle cx="10.9" cy="9.4" r="3.1" fill="#fff" stroke="#2f72c0" stroke-width="1.3"/><line x1="8.8" y1="11.6" x2="6.9" y2="14" stroke="#2f72c0" stroke-width="1.7" stroke-linecap="round"/></svg>
<div class="t " style="left:832.80px;top:374.70px;">Podgląd</div>
<svg style="left:880.50px;top:371.50px" width="16" height="16" viewBox="0 0 16 16"><path d="M2.31 6.37 A6.3 6.3 0 0 1 14.68 7.45" fill="none" stroke="#2a9d63" stroke-width="2"/><path d="M2.31 9.63 A6.3 6.3 0 0 0 14.49 9.63" fill="none" stroke="#2a9d63" stroke-width="2"/><path d="M1.3 1.8 L1.3 7.5 L7 7.5Z" fill="#2a9d63"/><path d="M15.5 14.2 L15.5 8.5 L9.8 8.5Z" fill="#2a9d63"/></svg>
<div class="a" style="left:911.00px;top:374.70px;width:1.00px;height:10.00px;background:#d0d0d0"></div>
<svg style="left:922.00px;top:371.50px" width="16" height="16" viewBox="0 0 16 16"><circle cx="5.2" cy="6.6" r="4.5" fill="none" stroke="#3a6fb5" stroke-width="1.1"/><line x1="8.2" y1="10" x2="10.6" y2="13.4" stroke="#2b5fa8" stroke-width="2.2" stroke-linecap="round"/><path d="M10.4 2.8 H14.4 M11 4.8 H15 M11 6.8 H15" stroke="#5a8acb" stroke-width="0.9"/></svg>
<svg style="left:7.20px;top:400.20px" width="14" height="16" viewBox="0 0 14 16"><rect x="0" y="0" width="10.8" height="14.4" fill="#c8d9ec"/><rect x="1.4" y="1.2" width="8" height="3.8" fill="#fff"/><rect x="1.4" y="6.3" width="1.9" height="2" fill="#fff"/><rect x="1.4" y="9.15" width="1.9" height="2" fill="#fff"/><rect x="1.4" y="12.0" width="1.9" height="2" fill="#fff"/><rect x="4.5" y="6.3" width="1.9" height="2" fill="#fff"/><rect x="4.5" y="9.15" width="1.9" height="2" fill="#fff"/><rect x="4.5" y="12.0" width="1.9" height="2" fill="#fff"/><rect x="7.6" y="6.3" width="1.9" height="2" fill="#fff"/><rect x="7.6" y="9.15" width="1.9" height="2" fill="#fff"/><rect x="7.6" y="12.0" width="1.9" height="2" fill="#fff"/></svg>
<div class="t dis" style="left:23.40px;top:401.70px;">Księgowanie korekty</div>
<svg style="left:127.00px;top:400.20px" width="14" height="16" viewBox="0 0 14 16"><rect x="0" y="0" width="10.8" height="14.4" fill="#c8d9ec"/><rect x="1.4" y="1.2" width="8" height="3.8" fill="#fff"/><rect x="1.4" y="6.3" width="1.9" height="2" fill="#fff"/><rect x="1.4" y="9.15" width="1.9" height="2" fill="#fff"/><rect x="1.4" y="12.0" width="1.9" height="2" fill="#fff"/><rect x="4.5" y="6.3" width="1.9" height="2" fill="#fff"/><rect x="4.5" y="9.15" width="1.9" height="2" fill="#fff"/><rect x="4.5" y="12.0" width="1.9" height="2" fill="#fff"/><rect x="7.6" y="6.3" width="1.9" height="2" fill="#fff"/><rect x="7.6" y="9.15" width="1.9" height="2" fill="#fff"/><rect x="7.6" y="12.0" width="1.9" height="2" fill="#fff"/></svg>
<div class="t dis" style="left:143.50px;top:401.70px;">Księgowanie storna</div>
<svg style="left:240.00px;top:399.50px" width="18" height="16" viewBox="0 0 18 16"><path d="M6.8 13.7 L1.6 13.7 Q1.2 13.7 1.2 13.3 L1.2 1.1 Q1.2 0.7 1.6 0.7 L11.4 0.7 Q11.8 0.7 11.8 1.1 L11.8 6.2" fill="none" stroke="#4a4a4a" stroke-width="1.2"/><circle cx="11" cy="10.7" r="4.3" fill="#d9483a"/><path d="M9.1 8.8 L12.9 12.6 M12.9 8.8 L9.1 12.6" stroke="#fff" stroke-width="1"/></svg>
<div class="t " style="left:258.20px;top:401.70px;">Wycofanie księgowania</div>
<div class="a" style="left:903.30px;top:413.20px;width:18.10px;height:7.20px;background:#f5f5f5;border:1px solid #d2d2d2;border-bottom:none;border-radius:2.5px 2.5px 0 0"></div>
<svg style="left:908.00px;top:414.30px" width="9" height="5" viewBox="0 0 9 5"><polyline points="1,1 4.5,4 8,1" fill="none" stroke="#2f5f95" stroke-width="1.3"/></svg>
<div class="a" style="left:1.00px;top:420.20px;width:943.00px;height:29.20px;background:#f1f1f1;border-top:1px solid #d2d2d2"></div>
<div class="a" style="left:25.40px;top:420.20px;width:1.00px;height:29.20px;background:#dcdcdc"></div>
<div class="a" style="left:217.20px;top:420.20px;width:1.00px;height:29.20px;background:#dcdcdc"></div>
<div class="a" style="left:349.50px;top:420.20px;width:1.00px;height:29.20px;background:#dcdcdc"></div>
<div class="a" style="left:560.20px;top:420.20px;width:1.00px;height:29.20px;background:#dcdcdc"></div>
<div class="a" style="left:925.40px;top:420.20px;width:1.00px;height:29.20px;background:#dcdcdc"></div>
<div class="a" style="left:931.50px;top:420.20px;width:1.00px;height:29.20px;background:#dcdcdc"></div>
<div class="a" style="left:25.40px;top:435.00px;width:900.00px;height:1.00px;background:#e2e2e2"></div>
<div class="a" style="left:47.20px;top:435.00px;width:1.00px;height:14.40px;background:#dcdcdc"></div>
<div class="a" style="left:62.00px;top:435.00px;width:1.00px;height:14.40px;background:#dcdcdc"></div>
<div class="a" style="left:276.00px;top:435.00px;width:1.00px;height:14.40px;background:#dcdcdc"></div>
<div class="a" style="left:416.20px;top:435.00px;width:1.00px;height:14.40px;background:#dcdcdc"></div>
<div class="a" style="left:429.40px;top:435.00px;width:1.00px;height:14.40px;background:#dcdcdc"></div>
<div class="a" style="left:489.30px;top:435.00px;width:1.00px;height:14.40px;background:#dcdcdc"></div>
<div class="a" style="left:604.40px;top:435.00px;width:1.00px;height:14.40px;background:#dcdcdc"></div>
<div class="a" style="left:619.20px;top:435.00px;width:1.00px;height:14.40px;background:#dcdcdc"></div>
<div class="a" style="left:741.40px;top:435.00px;width:1.00px;height:14.40px;background:#dcdcdc"></div>
<div class="a" style="left:833.40px;top:435.00px;width:1.00px;height:14.40px;background:#dcdcdc"></div>
<div class="a" style="left:1.00px;top:449.40px;width:943.00px;height:1.60px;background:#c4c4c4"></div>
<div class="t b" style="left:29.60px;top:422.80px;color:#222">Przyczyna korekty</div>
<div class="t b" style="left:221.70px;top:422.80px;color:#222">Rozrachunki</div>
<div class="t b" style="left:354.00px;top:422.80px;color:#222">Dokument</div>
<div class="t b" style="left:565.00px;top:422.80px;color:#222">Dokument księgowy</div>
<div class="t b" style="left:29.60px;top:437.40px;color:#222">Typ</div>
<div class="t b" style="left:66.40px;top:437.40px;color:#222">Opis</div>
<div class="t b" style="left:221.70px;top:437.40px;color:#222">Liczba</div>
<div class="t b" style="left:280.00px;top:437.40px;color:#222">Kwota</div>
<div class="t b" style="left:354.00px;top:437.40px;color:#222">Korekta</div>
<div class="t b" style="left:434.50px;top:437.40px;color:#222">Storno</div>
<div class="t b" style="left:493.30px;top:437.40px;color:#222">Kwota</div>
<div class="t b" style="left:565.00px;top:437.40px;color:#222">Data</div>
<div class="t b" style="left:623.50px;top:437.40px;color:#222">Numer</div>
<div class="t b" style="left:745.00px;top:437.40px;color:#222">Data dowodu</div>
<div class="t b" style="left:837.50px;top:437.40px;color:#222">Status</div>
<svg style="left:51.60px;top:438.80px" width="12" height="12" viewBox="0 0 12 12"><path d="M3.5 0.3 L0.2 3.8 M3.5 0.3 L6.8 3.8 M3.5 0.5 V7.4" fill="none" stroke="#3aa876" stroke-width="1.6"/></svg>
<div class="t" style="right:885.20px;top:442.60px;font-size:6.8px;font-weight:bold;line-height:7px;color:#4a4a4a">2</div>
<svg style="left:419.70px;top:438.20px" width="12" height="12" viewBox="0 0 12 12"><path d="M3.5 7.6 L0.2 4.1 M3.5 7.6 L6.8 4.1 M3.5 7.4 V0.5" fill="none" stroke="#3aa876" stroke-width="1.6"/></svg>
<div class="t" style="left:426.60px;top:436.20px;font-size:6.5px;line-height:7px;color:#444">1</div>
<svg style="left:608.70px;top:438.80px" width="12" height="12" viewBox="0 0 12 12"><path d="M3.5 0.3 L0.2 3.8 M3.5 0.3 L6.8 3.8 M3.5 0.5 V7.4" fill="none" stroke="#3aa876" stroke-width="1.6"/></svg>
<div class="t" style="right:328.20px;top:442.60px;font-size:6.8px;font-weight:bold;line-height:7px;color:#4a4a4a">3</div>
<div class="a" style="left:7.60px;top:437.40px;width:11.00px;height:10.60px;background:#fff;border:1px solid #c2c2c2"></div>
<svg style="left:934.00px;top:430.50px" width="8" height="10" viewBox="0 0 8 10"><polyline points="5.6,0.8 1.8,4.6 5.6,8.4" fill="none" stroke="#2f72c0" stroke-width="1.3"/></svg>
<div class="a" style="left:1.00px;top:451.00px;width:943.00px;height:18.50px;background:#fff"></div>
<div class="a" style="left:1.00px;top:469.50px;width:943.00px;height:1.00px;background:#dfe8ec"></div>
<div class="a" style="left:24.40px;top:451.00px;width:1.00px;height:19.50px;background:#dbe7f4"></div>
<div class="a" style="left:8.00px;top:454.75px;width:10.60px;height:10.60px;background:#fff;border:1px solid #c6c6c6"></div>
<div class="t " style="right:886.80px;top:455.25px;">1</div>
<div class="t " style="left:66.70px;top:455.25px;">Niezapłacone należności</div>
<div class="t " style="right:672.50px;top:455.25px;">5</div>
<div class="t " style="right:598.80px;top:455.25px;">149 188,38</div>
<div class="a" style="left:385.20px;top:454.75px;width:10.60px;height:10.60px;background:#fff;border:1px solid #c6c6c6"></div>
<svg style="left:385.20px;top:452.15px" width="13" height="13" viewBox="0 0 13 13"><polyline points="2.2,6.8 4.8,9.2 10.6,2.8" fill="none" stroke="#1c8ce0" stroke-width="2.1"/></svg>
<div class="a" style="left:454.90px;top:454.75px;width:10.60px;height:10.60px;background:#fff;border:1px solid #c6c6c6"></div>
<div class="t " style="right:387.40px;top:455.25px;">-121 306,00</div>
<div class="t " style="left:565.00px;top:455.25px;">2020.04.30</div>
<div class="t " style="left:623.50px;top:455.25px;">PKUZZD/C01/20/2</div>
<div class="t " style="left:745.00px;top:455.25px;">2020.04.30</div>
<div class="t " style="right:22.80px;top:455.25px;">1</div>
<div class="a" style="left:1.00px;top:470.50px;width:943.00px;height:18.50px;background:#e8f0f3"></div>
<div class="a" style="left:24.40px;top:470.50px;width:1.00px;height:19.50px;background:#dbe7f4"></div>
<div class="a" style="left:8.00px;top:474.25px;width:10.60px;height:10.60px;background:#fff;border:1px solid #c6c6c6"></div>
<div class="t " style="right:886.80px;top:474.75px;">1</div>
<div class="t " style="left:66.70px;top:474.75px;">Niezapłacone należności</div>
<div class="t " style="right:672.50px;top:474.75px;">5</div>
<div class="t " style="right:598.80px;top:474.75px;">149 188,38</div>
<div class="a" style="left:385.20px;top:474.25px;width:10.60px;height:10.60px;background:#fff;border:1px solid #c6c6c6"></div>
<div class="a" style="left:454.90px;top:474.25px;width:10.60px;height:10.60px;background:#fff;border:1px solid #c6c6c6"></div>
<svg style="left:454.90px;top:471.65px" width="13" height="13" viewBox="0 0 13 13"><polyline points="2.2,6.8 4.8,9.2 10.6,2.8" fill="none" stroke="#1c8ce0" stroke-width="2.1"/></svg>
<div class="t " style="right:387.40px;top:474.75px;">121 306,00</div>
<div class="t " style="left:565.00px;top:474.75px;">2020.05.01</div>
<div class="t " style="left:623.50px;top:474.75px;">PKUZZD/C01/20/3</div>
<div class="t " style="left:745.00px;top:474.75px;">2020.05.01</div>
<div class="t " style="right:22.80px;top:474.75px;">1</div>
<div class="a" style="left:25.80px;top:450.50px;width:36.80px;height:18.50px;border:3px solid #0f7cc0"></div>
<div class="a" style="left:407px;top:60.6px;width:115.4px;height:33.4px;border:2px solid #f7202a;border-radius:5px;box-shadow:inset 0 0 2.5px rgba(90,120,130,.45),0 0 2px rgba(0,0,0,.12)"></div>
<div class="a" style="left:122.7px;top:390.2px;width:114.3px;height:30.8px;border:2px solid #f7202a;border-radius:5px;box-shadow:inset 0 0 2.5px rgba(90,120,130,.45),0 0 2px rgba(0,0,0,.12)"></div>
<div class="a" style="left:0;top:0;width:1px;height:600px;background:#3d8fd0"></div>
<div class="a" style="left:944px;top:0;width:1px;height:600px;background:#2fb0e6"></div>
<div class="a" style="left:0;top:599px;width:945px;height:1px;background:linear-gradient(90deg,#3d8fd0 0,#1a9ada 400px,#15a9e4 945px)"></div>
<!--RED-->
</body></html>
